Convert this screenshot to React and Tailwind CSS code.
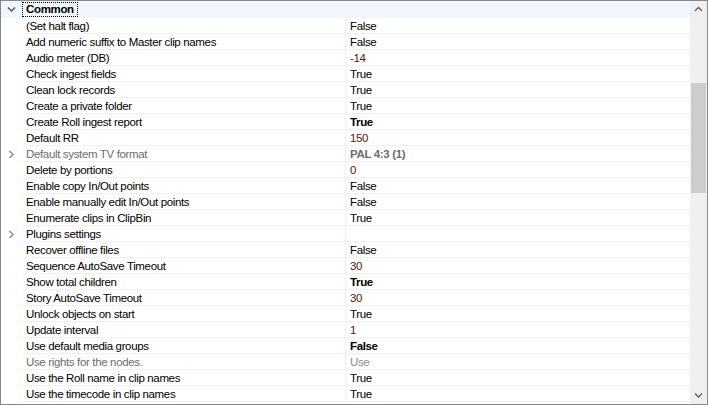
const rows = [
  ["(Set halt flag)", "False"],
  ["Add numeric suffix to Master clip names", "False"],
  ["Audio meter (DB)", "-14", "num"],
  ["Check ingest fields", "True"],
  ["Clean lock records", "True"],
  ["Create a private folder", "True"],
  ["Create Roll ingest report", "True", "bold"],
  ["Default RR", "150", "num"],
  ["Default system TV format", "PAL 4:3 (1)", "disbold", true],
  ["Delete by portions", "0", "num"],
  ["Enable copy In/Out points", "False"],
  ["Enable manually edit In/Out points", "False"],
  ["Enumerate clips in ClipBin", "True"],
  ["Plugins settings", "", "", true],
  ["Recover offline files", "False"],
  ["Sequence AutoSave Timeout", "30", "num"],
  ["Show total children", "True", "bold"],
  ["Story AutoSave Timeout", "30", "num"],
  ["Unlock objects on start", "True"],
  ["Update interval", "1", "num"],
  ["Use default media groups", "False", "bold"],
  ["Use rights for the nodes.", "Use", "dis"],
  ["Use the Roll name in clip names", "True"],
  ["Use the timecode in clip names", "True"],
];

const Chev = ({ d }) => (
  <svg width="9" height="9" viewBox="0 0 9 9">
    <path d={d} fill="none" stroke="currentColor" strokeWidth="1.4" />
  </svg>
);

export default function App() {
  return (
    <div className="w-[708px] h-[405px] border border-[#828790] bg-white flex overflow-hidden text-[11.5px] tracking-[-0.35px] text-black" style={{ fontFamily: '"Liberation Sans", Arial, sans-serif' }}>
      <div className="flex-1 flex flex-col min-w-0">
        <div className="h-[17px] flex items-center bg-[#f0f6fb] shrink-0">
          <div className="w-[21px] flex justify-center text-[#555]"><Chev d="M1 2.5 L4.5 6 L8 2.5" /></div>
          <div className="font-bold border border-dotted border-black px-[3px] leading-[13px]">Common</div>
        </div>
        {rows.map(([n, v, k, exp], i) => (
          <div key={i} className="h-[16px] flex shrink-0">
            <div className="w-[21px] flex items-center justify-center text-[#888]">{exp && <Chev d="M2.5 1 L6 4.5 L2.5 8" />}</div>
            <div className={`w-[324px] pl-[4px] pt-[2px] border-b border-[#f0f0f0] border-r leading-[13px] whitespace-nowrap ${k && k.startsWith("dis") ? "text-[#6d6d6d]" : ""}`}>{n}</div>
            <div className={`flex-1 pl-[4px] pt-[2px] border-b border-[#f0f0f0] leading-[13px] ${k === "bold" ? "font-bold" : ""} ${k === "disbold" ? "font-bold text-[#6d6d6d]" : ""} ${k === "dis" ? "text-[#8a8a8a]" : ""} ${k === "num" ? "text-[#5a1400]" : ""}`}>{v}</div>
          </div>
        ))}
      </div>
      <div className="w-[17px] bg-[#f0f0f0] flex flex-col shrink-0">
        <div className="h-[17px] flex items-center justify-center text-[#606060]"><Chev d="M1 6 L4.5 2.5 L8 6" /></div>
        <div className="h-[65px]" />
        <div className="h-[110px] mx-[1px] bg-[#cdcdcd]" />
        <div className="flex-1" />
        <div className="h-[17px] flex items-center justify-center text-[#606060]"><Chev d="M1 2.5 L4.5 6 L8 2.5" /></div>
      </div>
    </div>
  );
}
